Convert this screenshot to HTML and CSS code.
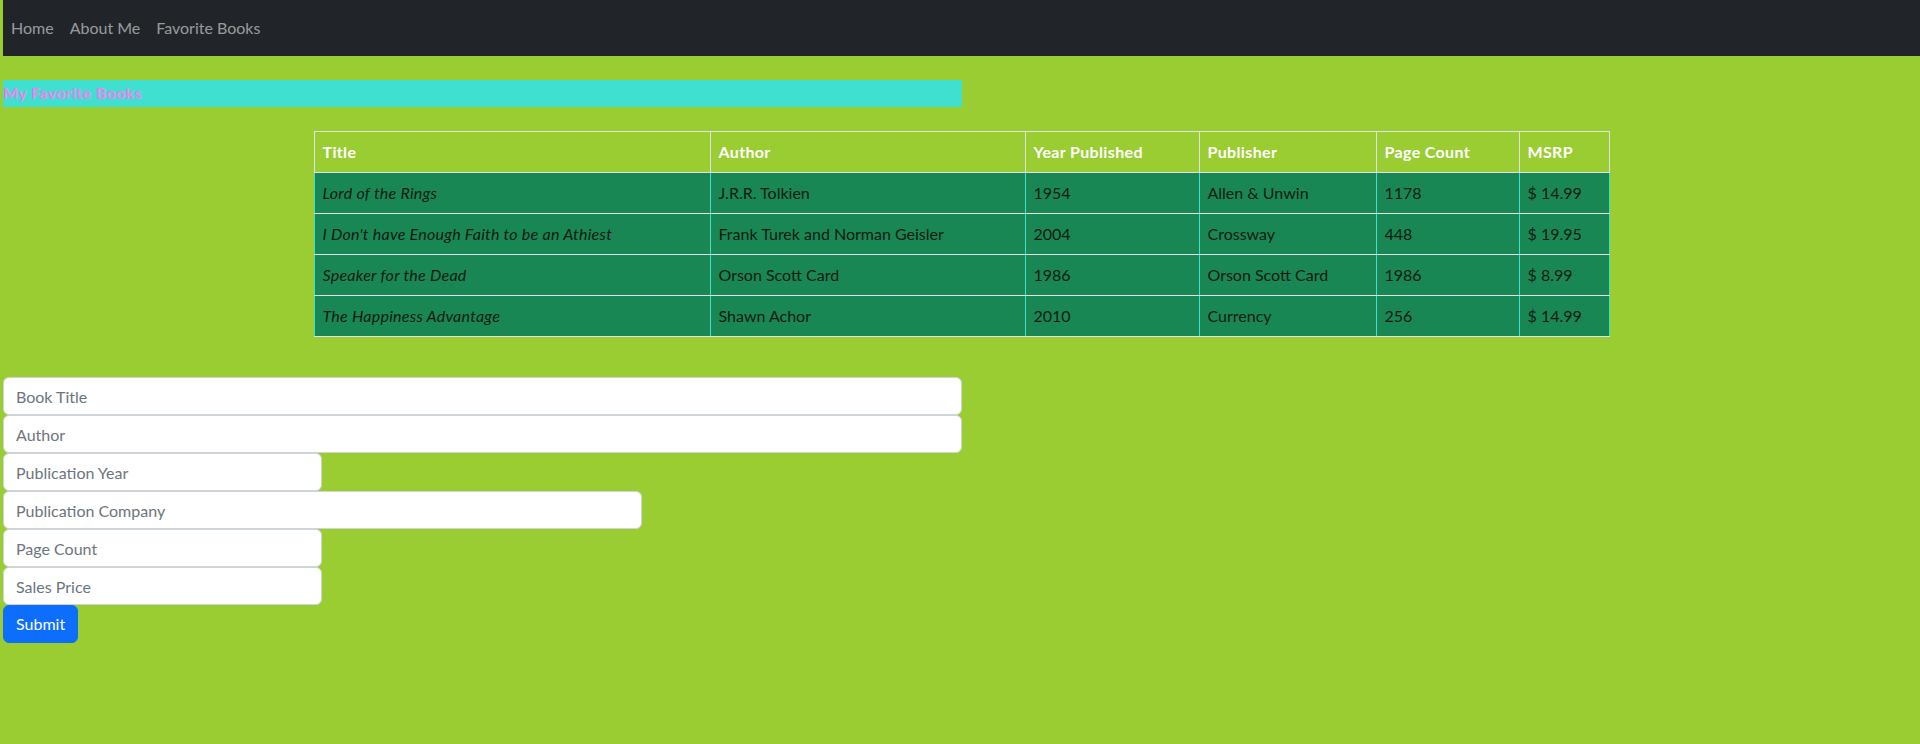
FILE: index.html
```html
<!DOCTYPE html>
<html lang="en">
<head>
<meta charset="utf-8">
<title>My Favorite Books</title>
<link rel="stylesheet" href="styles.css">
</head>
<body>
<nav class="navbar">
  <a class="nav-link" href="#">Home</a>
  <a class="nav-link" href="#">About Me</a>
  <a class="nav-link" href="#">Favorite Books</a>
</nav>

<main>
  <div class="column">
    <h1 class="page-title">My Favorite Books</h1>
  </div>

  <table class="books">
    <colgroup>
      <col class="c-title">
      <col class="c-author">
      <col class="c-year">
      <col class="c-pub">
      <col class="c-pages">
      <col class="c-msrp">
    </colgroup>
    <thead>
      <tr>
        <th>Title</th>
        <th>Author</th>
        <th>Year Published</th>
        <th>Publisher</th>
        <th>Page Count</th>
        <th>MSRP</th>
      </tr>
    </thead>
    <tbody>
      <tr>
        <td><em>Lord of the Rings</em></td>
        <td>J.R.R. Tolkien</td>
        <td>1954</td>
        <td>Allen &amp; Unwin</td>
        <td>1178</td>
        <td>$ 14.99</td>
      </tr>
      <tr>
        <td><em>I Don't have Enough Faith to be an Athiest</em></td>
        <td>Frank Turek and Norman Geisler</td>
        <td>2004</td>
        <td>Crossway</td>
        <td>448</td>
        <td>$ 19.95</td>
      </tr>
      <tr>
        <td><em>Speaker for the Dead</em></td>
        <td>Orson Scott Card</td>
        <td>1986</td>
        <td>Orson Scott Card</td>
        <td>1986</td>
        <td>$ 8.99</td>
      </tr>
      <tr>
        <td><em>The Happiness Advantage</em></td>
        <td>Shawn Achor</td>
        <td>2010</td>
        <td>Currency</td>
        <td>256</td>
        <td>$ 14.99</td>
      </tr>
    </tbody>
  </table>

  <form class="column book-form">
    <input class="form-control w-full" type="text" placeholder="Book Title">
    <input class="form-control w-full" type="text" placeholder="Author">
    <input class="form-control w-third" type="text" placeholder="Publication Year">
    <input class="form-control w-two-thirds" type="text" placeholder="Publication Company">
    <input class="form-control w-third" type="text" placeholder="Page Count">
    <input class="form-control w-third" type="text" placeholder="Sales Price">
    <button class="btn-primary" type="button">Submit</button>
  </form>
</main>
</body>
</html>
```

FILE: styles.css
```css
* {
  box-sizing: border-box;
}

html, body {
  height: 100%;
}

body {
  margin: 0 0 0 3px;
  background: #9acd32;
  font-family: "Lato", "Open Sans", sans-serif;
  font-size: 16px;
  line-height: 24px;
  color: #212529;
}

.navbar {
  display: flex;
  align-items: center;
  height: 56px;
  padding: 8px 0;
  background: #212529;
}

.nav-link {
  padding: 8px;
  color: rgba(255, 255, 255, 0.55);
  text-decoration: none;
}

main {
  display: flex;
  flex-direction: column;
  padding-top: 24px;
}

.column {
  width: 959px;
}

.page-title {
  margin: 0;
  height: 27px;
  line-height: 26px;
  font-size: 16px;
  font-weight: 700;
  letter-spacing: 0.35px;
  color: #ee82ee;
  background: #40e0d0;
}

.books {
  margin: 24px auto 0;
  width: 1295px;
  table-layout: fixed;
  border-collapse: collapse;
}

.c-title { width: 396px; }
.c-author { width: 315px; }
.c-year { width: 174px; }
.c-pub { width: 177px; }
.c-pages { width: 143px; }
.c-msrp { width: 90px; }

.books th,
.books td {
  padding: 8px;
  text-align: left;
  vertical-align: top;
  white-space: nowrap;
}

.books th {
  color: #fff;
  font-weight: 700;
  letter-spacing: 0.35px;
  border: 1px solid #dee2e6;
}

.books td {
  color: #0d1a12;
  background: #198754;
  border-top: 1px solid #dee2e6;
  border-bottom: 1px solid #dee2e6;
  border-left: 1px solid #40e0d0;
  border-right: 1px solid #40e0d0;
}

.books em {
  font-style: italic;
  letter-spacing: 0.25px;
}

.book-form {
  display: flex;
  flex-direction: column;
  align-items: flex-start;
  margin-top: 40px;
}

.form-control {
  display: block;
  height: 38px;
  padding: 6px 12px;
  font-family: inherit;
  font-size: 16px;
  line-height: 24px;
  color: #212529;
  background: #fff;
  border: 1px solid #ced4da;
  border-radius: 6px;
}

.form-control::placeholder {
  color: #6c757d;
}

.w-full { width: 959px; }
.w-third { width: 319px; }
.w-two-thirds { width: 639px; }

.btn-primary {
  height: 38px;
  padding: 6px 12px;
  font-family: inherit;
  font-size: 16px;
  line-height: 24px;
  color: #fff;
  background: #0d6efd;
  border: 1px solid #0d6efd;
  border-radius: 6px;
}
```
